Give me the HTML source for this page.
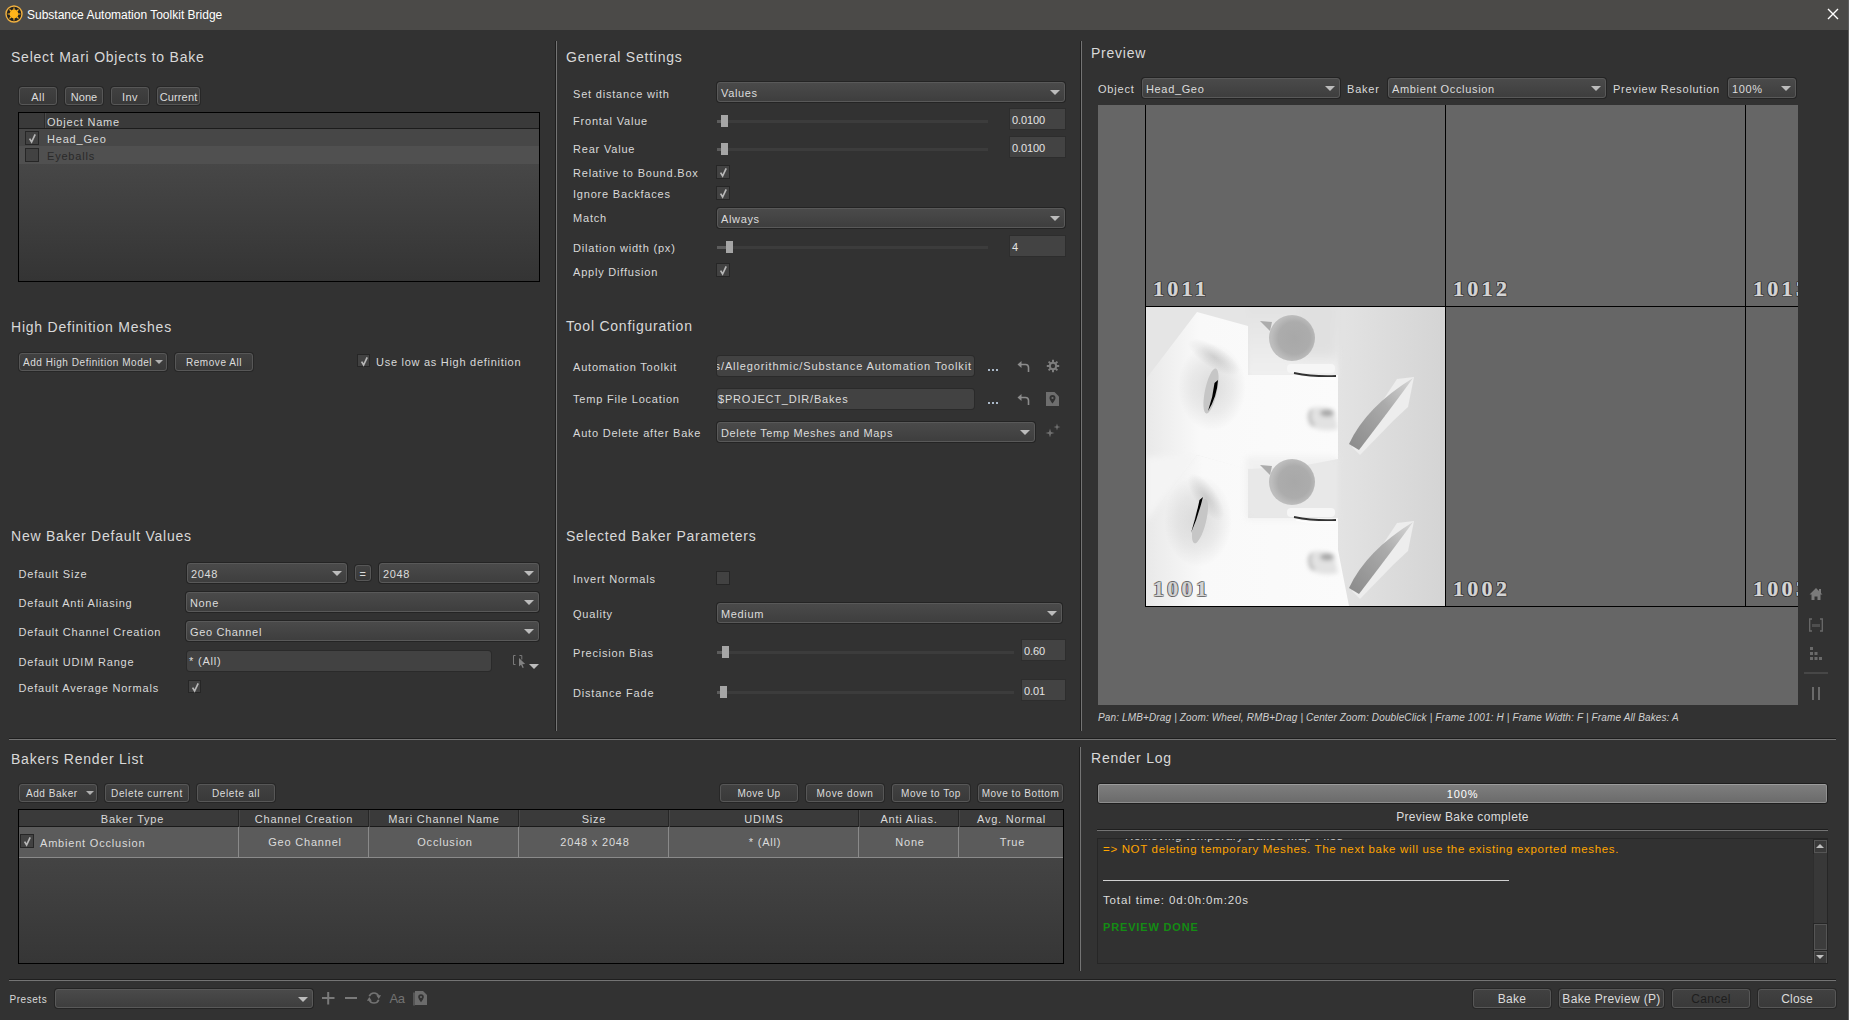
<!DOCTYPE html>
<html><head><meta charset="utf-8"><style>
*{box-sizing:border-box;margin:0;padding:0}
html,body{width:1849px;height:1020px;overflow:hidden;background:#323232;font-family:"Liberation Sans",sans-serif;color:#d4d4d4}
.a{position:absolute;white-space:nowrap}
.h{position:absolute;white-space:nowrap;font-size:14px;line-height:14px;letter-spacing:.77px;color:#d9d9d9}
.l{position:absolute;white-space:nowrap;font-size:11px;line-height:11px;letter-spacing:.8px;color:#d9d9d9}
.btn{position:absolute;border:1px solid #575757;border-radius:3px;background:linear-gradient(#414141,#393939);box-shadow:0 0 0 1px #272727;font-size:10px;letter-spacing:.55px;text-align:center;color:#dcdcdc;white-space:nowrap}
.cb{position:absolute;border:1px solid #595959;border-radius:3px;background:linear-gradient(#4a4a4a,#3e3e3e);box-shadow:0 0 0 1px #242424;font-size:11px;letter-spacing:.65px;color:#dcdcdc;white-space:nowrap;padding-left:3px;overflow:hidden}
.ar{position:absolute;width:0;height:0;border-left:5px solid transparent;border-right:5px solid transparent;border-top:5px solid #bcbcbc}
.inp{position:absolute;box-shadow:0 0 0 1px #2a2a2a;border-radius:3px;background:#424242;font-size:11px;letter-spacing:.8px;color:#dcdcdc;white-space:nowrap;overflow:hidden;padding-left:1px}
.vb{position:absolute;background:#434343;box-shadow:0 0 0 1px #2d2d2d;font-size:11px;letter-spacing:-.1px;color:#e4e4e4;padding-left:2px;white-space:nowrap}
.chk{position:absolute;border:1px solid #262626;background:#424242}
.vl{position:absolute;width:1px;background:#1e1e1e;box-shadow:1px 0 0 #747474}
.hl{position:absolute;height:1px;background:#1e1e1e;box-shadow:0 1px 0 #747474}
.gr{position:absolute;height:3px;background:#3c3c3c}
.gl{position:absolute;height:3px;background:#5c5c5c}
.hd{position:absolute;background:#a5a5a5}
.ico{position:absolute}
.tile{position:absolute;font-family:"Liberation Serif",serif;font-weight:bold;font-size:22px;line-height:22px;letter-spacing:3.3px;color:#d4d4d4;-webkit-text-stroke:.5px #d4d4d4;text-shadow:1px 0 0 rgba(0,0,0,.42),-1px 0 0 rgba(0,0,0,.42),0 1px 0 rgba(0,0,0,.42),0 -1px 0 rgba(0,0,0,.42),1px 1px 0 rgba(0,0,0,.3),-1px -1px 0 rgba(0,0,0,.3),1px -1px 0 rgba(0,0,0,.3),-1px 1px 0 rgba(0,0,0,.3)}
.th{position:absolute;font-size:11px;line-height:17px;letter-spacing:.8px;color:#d9d9d9;text-align:center;white-space:nowrap;overflow:hidden}
.td{position:absolute;font-size:11px;line-height:30px;letter-spacing:.8px;color:#dcdcdc;text-align:center;white-space:nowrap;overflow:hidden}
</style></head><body>
<div class="a" style="left:0px;top:0px;width:1849px;height:30px;background:#4b4a48"></div>
<svg class="ico" style="left:5px;top:5px" width="18" height="18" viewBox="0 0 18 18">
 <circle cx="9" cy="9" r="8" fill="#222" stroke="#f0b040" stroke-width="1.4"/>
 <circle cx="9" cy="9" r="4.4" fill="#ffb41a"/>
 <g stroke="#ffb41a" stroke-width="1.1"><path d="M9 2.6v3M9 12.4v3M2.6 9h3M12.4 9h3M4.5 4.5l2 2M11.5 11.5l2 2M13.5 4.5l-2 2M4.5 13.5l2-2"/></g>
</svg>
<div class="a" style="left:27px;top:9px;font-size:12px;line-height:12px;color:#fff">Substance Automation Toolkit Bridge</div>
<svg class="ico" style="left:1827px;top:8px" width="12" height="12" viewBox="0 0 12 12"><path d="M1 1L11 11M11 1L1 11" stroke="#fff" stroke-width="1.4"/></svg>
<div class="a" style="left:1848px;top:0px;width:1px;height:1020px;background:#5e5e5e"></div>
<div class="vl" style="left:555px;top:41px;height:690px"></div>
<div class="vl" style="left:1080px;top:41px;height:690px"></div>
<div class="hl" style="left:9px;top:738px;width:1827px"></div>
<div class="vl" style="left:1079px;top:747px;height:224px"></div>
<div class="hl" style="left:9px;top:979px;width:1827px"></div>
<div class="h" style="left:11px;top:49.6px;">Select Mari Objects to Bake</div>
<div class="btn" style="left:19px;top:87px;width:38px;height:18px;line-height:18px;font-size:11px;letter-spacing:.5px">All</div>
<div class="btn" style="left:65px;top:87px;width:38px;height:18px;line-height:18px;font-size:11px;letter-spacing:.1px">None</div>
<div class="btn" style="left:111px;top:87px;width:38px;height:18px;line-height:18px;font-size:11px;letter-spacing:.5px">Inv</div>
<div class="btn" style="left:157px;top:87px;width:43px;height:18px;line-height:18px;font-size:11px;letter-spacing:.15px">Current</div>
<div class="a" style="left:18px;top:112px;width:522px;height:170px;border:1px solid #000;background:linear-gradient(#4f4f4f,#343434)"></div>
<div class="a" style="left:19px;top:113px;width:520px;height:16px;background:#3a3a3a;border-bottom:1px solid #1c1c1c"></div>
<div class="a" style="left:44px;top:113px;width:1px;height:15px;background:#2a2a2a;box-shadow:1px 0 0 #4a4a4a"></div>
<div class="l" style="left:47px;top:116.8px;font-size:11px;line-height:11px;">Object Name</div>
<div class="a" style="left:19px;top:129px;width:520px;height:17px;background:#474747"></div>
<div class="a" style="left:19px;top:146px;width:520px;height:18px;background:#505050"></div>
<div class="chk" style="left:25px;top:131px;width:14px;height:14px"><svg width="13" height="13" viewBox="0 0 13 13" style="position:absolute;left:0;top:0"><path d="M3.6 6.6L5.6 10L9.2 2.4" fill="none" stroke="#b8b8b8" stroke-width="1.7"/></svg></div>
<div class="chk" style="left:25px;top:148px;width:14px;height:14px"></div>
<div class="l" style="left:47px;top:133.8px;font-size:11px;line-height:11px;">Head_Geo</div>
<div class="l" style="left:47px;top:150.8px;font-size:11px;line-height:11px;color:#2a2a2a">Eyeballs</div>
<div class="h" style="left:11px;top:320.4px;">High Definition Meshes</div>
<div class="btn" style="left:19px;top:353px;width:148px;height:18px;line-height:18px;text-align:left;padding-left:3px;letter-spacing:.54px">Add High Definition Model</div>
<div class="ar" style="left:155px;top:360px;border-width:4px 4px 0;border-top-color:#b0b0b0"></div>
<div class="btn" style="left:175px;top:353px;width:78px;height:18px;line-height:18px;">Remove All</div>
<div class="chk" style="left:357px;top:354px;width:13px;height:13px"><svg width="13" height="13" viewBox="0 0 13 13" style="position:absolute;left:0;top:0"><path d="M3.6 6.6L5.6 10L9.2 2.4" fill="none" stroke="#b8b8b8" stroke-width="1.7"/></svg></div>
<div class="l" style="left:376px;top:356.9px;font-size:11px;line-height:11px;letter-spacing:.72px">Use low as High definition</div>
<div class="h" style="left:11px;top:529.4px;">New Baker Default Values</div>
<div class="l" style="left:18.5px;top:569.3px;font-size:11px;line-height:11px;">Default Size</div>
<div class="l" style="left:18.5px;top:598.3px;font-size:11px;line-height:11px;">Default Anti Aliasing</div>
<div class="l" style="left:18.5px;top:626.7px;font-size:11px;line-height:11px;">Default Channel Creation</div>
<div class="l" style="left:18.5px;top:657.3px;font-size:11px;line-height:11px;">Default UDIM Range</div>
<div class="l" style="left:18.5px;top:683.3px;font-size:11px;line-height:11px;">Default Average Normals</div>
<div class="cb" style="left:187px;top:563px;width:160px;height:20px;line-height:20px;">2048</div>
<div class="ar" style="left:332px;top:571.0px"></div>
<div class="btn" style="left:355px;top:565px;width:16px;height:16px;line-height:16px;font-size:11px">=</div>
<div class="cb" style="left:379px;top:563px;width:160px;height:20px;line-height:20px;">2048</div>
<div class="ar" style="left:524px;top:571.0px"></div>
<div class="cb" style="left:186px;top:592px;width:353px;height:20px;line-height:20px;">None</div>
<div class="ar" style="left:524px;top:600.0px"></div>
<div class="cb" style="left:186px;top:621px;width:353px;height:20px;line-height:20px;">Geo Channel</div>
<div class="ar" style="left:524px;top:629.0px"></div>
<div class="inp" style="left:187px;top:651px;width:304px;height:20px;line-height:20px;padding-left:2px">* (All)</div>
<svg class="ico" style="left:511px;top:653px" width="30" height="18" viewBox="0 0 30 18">
<path d="M4.5 2.5h-2v9h2M8.5 2.5h2.3v4" fill="none" stroke="#7a7a7a" stroke-width="1"/>
<path d="M8 5l0 8.5l2-1.8l1.6 3.4l1.2-.6l-1.5-3.3l2.9-.1z" fill="#828282"/>
<path d="M18 11h10l-5 5z" fill="#bcbcbc"/>
</svg>
<div class="chk" style="left:188px;top:680px;width:13px;height:13px"><svg width="13" height="13" viewBox="0 0 13 13" style="position:absolute;left:0;top:0"><path d="M3.6 6.6L5.6 10L9.2 2.4" fill="none" stroke="#b8b8b8" stroke-width="1.7"/></svg></div>
<div class="h" style="left:566px;top:49.6px;">General Settings</div>
<div class="l" style="left:573px;top:88.5px;font-size:11px;line-height:11px;">Set distance with</div>
<div class="cb" style="left:717px;top:82px;width:348px;height:20px;line-height:20px;">Values</div>
<div class="ar" style="left:1050px;top:90.0px"></div>
<div class="l" style="left:573px;top:115.9px;font-size:11px;line-height:11px;">Frontal Value</div>
<div class="gr" style="left:717px;top:120.0px;width:271px"></div>
<div class="gl" style="left:717px;top:120.0px;width:4px"></div>
<div class="hd" style="left:721px;top:115px;width:7px;height:12px"></div>
<div class="vb" style="left:1010px;top:109px;width:55px;height:20px;line-height:19px;padding-top:2px">0.0100</div>
<div class="l" style="left:573px;top:143.7px;font-size:11px;line-height:11px;">Rear Value</div>
<div class="gr" style="left:717px;top:148.0px;width:271px"></div>
<div class="gl" style="left:717px;top:148.0px;width:4px"></div>
<div class="hd" style="left:721px;top:143px;width:7px;height:12px"></div>
<div class="vb" style="left:1010px;top:137px;width:55px;height:20px;line-height:19px;padding-top:2px">0.0100</div>
<div class="l" style="left:573px;top:168.0px;font-size:11px;line-height:11px;">Relative to Bound.Box</div>
<div class="chk" style="left:716px;top:165px;width:14px;height:14px"><svg width="13" height="13" viewBox="0 0 13 13" style="position:absolute;left:0;top:0"><path d="M3.6 6.6L5.6 10L9.2 2.4" fill="none" stroke="#b8b8b8" stroke-width="1.7"/></svg></div>
<div class="l" style="left:573px;top:189.1px;font-size:11px;line-height:11px;">Ignore Backfaces</div>
<div class="chk" style="left:716px;top:186px;width:14px;height:14px"><svg width="13" height="13" viewBox="0 0 13 13" style="position:absolute;left:0;top:0"><path d="M3.6 6.6L5.6 10L9.2 2.4" fill="none" stroke="#b8b8b8" stroke-width="1.7"/></svg></div>
<div class="l" style="left:573px;top:213.1px;font-size:11px;line-height:11px;">Match</div>
<div class="cb" style="left:717px;top:208px;width:348px;height:20px;line-height:20px;">Always</div>
<div class="ar" style="left:1050px;top:216.0px"></div>
<div class="l" style="left:573px;top:242.9px;font-size:11px;line-height:11px;">Dilation width (px)</div>
<div class="gr" style="left:717px;top:245.5px;width:271px"></div>
<div class="gl" style="left:717px;top:245.5px;width:9px"></div>
<div class="hd" style="left:726px;top:241px;width:7px;height:12px"></div>
<div class="vb" style="left:1010px;top:236px;width:55px;height:20px;line-height:19px;padding-top:2px">4</div>
<div class="l" style="left:573px;top:266.6px;font-size:11px;line-height:11px;">Apply Diffusion</div>
<div class="chk" style="left:716px;top:263px;width:14px;height:14px"><svg width="13" height="13" viewBox="0 0 13 13" style="position:absolute;left:0;top:0"><path d="M3.6 6.6L5.6 10L9.2 2.4" fill="none" stroke="#b8b8b8" stroke-width="1.7"/></svg></div>
<div class="h" style="left:566px;top:319.4px;">Tool Configuration</div>
<div class="l" style="left:573px;top:361.6px;font-size:11px;line-height:11px;">Automation Toolkit</div>
<div class="inp" style="left:717px;top:356px;width:257px;height:20px;line-height:20px;letter-spacing:.88px"><span style="position:absolute;right:2px;top:0">es/Allegorithmic/Substance Automation Toolkit</span></div>
<div class="l" style="left:573px;top:394.4px;font-size:11px;line-height:11px;">Temp File Location</div>
<div class="inp" style="left:717px;top:389px;width:257px;height:20px;line-height:20px;">$PROJECT_DIR/Bakes</div>
<div class="l" style="left:573px;top:428.3px;font-size:11px;line-height:11px;">Auto Delete after Bake</div>
<div class="cb" style="left:717px;top:422px;width:318px;height:20px;line-height:20px;">Delete Temp Meshes and Maps</div>
<div class="ar" style="left:1020px;top:430.0px"></div>
<div class="a" style="left:988px;top:369px;width:2px;height:2px;background:#aab8c8"></div>
<div class="a" style="left:992px;top:369px;width:2px;height:2px;background:#aab8c8"></div>
<div class="a" style="left:996px;top:369px;width:2px;height:2px;background:#aab8c8"></div>
<div class="a" style="left:988px;top:402px;width:2px;height:2px;background:#aab8c8"></div>
<div class="a" style="left:992px;top:402px;width:2px;height:2px;background:#aab8c8"></div>
<div class="a" style="left:996px;top:402px;width:2px;height:2px;background:#aab8c8"></div>
<svg class="ico" style="left:1017px;top:360px" width="13" height="13" viewBox="0 0 13 13"><path d="M3 4.5h5.5a3 3 0 0 1 3 3V12" fill="none" stroke="#8c8c8c" stroke-width="1.6"/><path d="M0.5 4.5L4.5 1v7z" fill="#8c8c8c"/></svg>
<svg class="ico" style="left:1017px;top:393px" width="13" height="13" viewBox="0 0 13 13"><path d="M3 4.5h5.5a3 3 0 0 1 3 3V12" fill="none" stroke="#8c8c8c" stroke-width="1.6"/><path d="M0.5 4.5L4.5 1v7z" fill="#8c8c8c"/></svg>
<svg class="ico" style="left:1046px;top:359px" width="14" height="14" viewBox="0 0 14 14">
<g fill="#7e7e7e"><circle cx="7" cy="7" r="4.2"/>
<g stroke="#7e7e7e" stroke-width="2"><path d="M7 0.8v2.6M7 10.6v2.6M0.8 7h2.6M10.6 7h2.6M2.6 2.6l1.8 1.8M9.6 9.6l1.8 1.8M11.4 2.6l-1.8 1.8M2.6 11.4l1.8-1.8"/></g></g>
<circle cx="7" cy="7" r="2.2" fill="#323232"/></svg>
<svg class="ico" style="left:1045px;top:391px" width="15" height="16" viewBox="0 0 15 16">
<path d="M1 1h8.5l4.5 4.5V15H1z" fill="#6e6e6e"/><path d="M7.5 4a3 3 0 0 1 3 3c0 2-3 5.5-3 5.5S4.5 9 4.5 7a3 3 0 0 1 3-3z" fill="#323232"/><circle cx="7.5" cy="7" r="1.1" fill="#6e6e6e"/></svg>
<svg class="ico" style="left:1045px;top:423px" width="17" height="17" viewBox="0 0 17 17">
<path d="M5 5.5L6 9L9.5 10L6 11L5 14.5L4 11L0.5 10L4 9z" fill="#707070"/>
<path d="M12 0.5L12.8 3.2L15.5 4L12.8 4.8L12 7.5L11.2 4.8L8.5 4L11.2 3.2z" fill="#707070"/>
</svg>
<div class="h" style="left:566px;top:529.4px;">Selected Baker Parameters</div>
<div class="l" style="left:573px;top:573.6px;font-size:11px;line-height:11px;">Invert Normals</div>
<div class="chk" style="left:716px;top:571px;width:14px;height:14px"></div>
<div class="l" style="left:573px;top:609.3px;font-size:11px;line-height:11px;">Quality</div>
<div class="cb" style="left:717px;top:603px;width:345px;height:20px;line-height:20px;">Medium</div>
<div class="ar" style="left:1047px;top:611.0px"></div>
<div class="l" style="left:573px;top:647.7px;font-size:11px;line-height:11px;">Precision Bias</div>
<div class="gr" style="left:717px;top:651.0px;width:297px"></div>
<div class="gl" style="left:717px;top:651.0px;width:5px"></div>
<div class="hd" style="left:722px;top:646px;width:7px;height:12px"></div>
<div class="vb" style="left:1022px;top:640px;width:43px;height:20px;line-height:19px;padding-top:2px">0.60</div>
<div class="l" style="left:573px;top:688.3px;font-size:11px;line-height:11px;">Distance Fade</div>
<div class="gr" style="left:717px;top:691.0px;width:297px"></div>
<div class="gl" style="left:717px;top:691.0px;width:3px"></div>
<div class="hd" style="left:720px;top:686px;width:7px;height:12px"></div>
<div class="vb" style="left:1022px;top:680px;width:43px;height:20px;line-height:19px;padding-top:2px">0.01</div>
<div class="h" style="left:1091px;top:45.6px;">Preview</div>
<div class="l" style="left:1098px;top:84.3px;font-size:11px;line-height:11px;">Object</div>
<div class="cb" style="left:1142px;top:78px;width:198px;height:20px;line-height:20px;">Head_Geo</div>
<div class="ar" style="left:1325px;top:86.0px"></div>
<div class="l" style="left:1347px;top:84.3px;font-size:11px;line-height:11px;">Baker</div>
<div class="cb" style="left:1388px;top:78px;width:218px;height:20px;line-height:20px;">Ambient Occlusion</div>
<div class="ar" style="left:1591px;top:86.0px"></div>
<div class="l" style="left:1613px;top:84.3px;font-size:11px;line-height:11px;letter-spacing:.71px">Preview Resolution</div>
<div class="cb" style="left:1728px;top:78px;width:68px;height:20px;line-height:20px;">100%</div>
<div class="ar" style="left:1781px;top:86.0px"></div>
<div class="a" style="left:1098px;top:105px;width:700px;height:600px;background:#666;overflow:hidden">
<svg style="position:absolute;left:48px;top:202px" width="299" height="299" viewBox="0 0 299 299"><defs>
<linearGradient id="rg" x1="0" y1="0" x2="1" y2="0"><stop offset="0" stop-color="#e3e3e3"/><stop offset="1" stop-color="#d4d4d4"/></linearGradient>
<linearGradient id="tg" x1="0" y1="0" x2="0" y2="1"><stop offset="0" stop-color="#e0e0e0"/><stop offset="1" stop-color="#f0f0f0"/></linearGradient>
<linearGradient id="fg" x1="0" y1="0" x2="1" y2="0"><stop offset="0" stop-color="#e9e9e9"/><stop offset="0.28" stop-color="#f9f9f9"/><stop offset="1" stop-color="#fbfbfb"/></linearGradient>
<radialGradient id="eyeg" cx="0.55" cy="0.5" r="0.5"><stop offset="0" stop-color="#a8a8a8"/><stop offset="0.7" stop-color="#acacac"/><stop offset="1" stop-color="#bdbdbd"/></radialGradient>
<radialGradient id="sh" cx="0.5" cy="0.5" r="0.5"><stop offset="0" stop-color="#000" stop-opacity="0.12"/><stop offset="0.6" stop-color="#000" stop-opacity="0.06"/><stop offset="1" stop-color="#000" stop-opacity="0"/></radialGradient>
<radialGradient id="sh2" cx="0.5" cy="0.5" r="0.5"><stop offset="0" stop-color="#000" stop-opacity="0.13"/><stop offset="1" stop-color="#000" stop-opacity="0"/></radialGradient>
<linearGradient id="bl" x1="0" y1="1" x2="1" y2="0"><stop offset="0" stop-color="#8a8a8a"/><stop offset="0.6" stop-color="#ababab"/><stop offset="1" stop-color="#d8d8d8"/></linearGradient>
<filter id="b2" x="-20%" y="-20%" width="140%" height="140%"><feGaussianBlur stdDeviation="2"/></filter>
<filter id="b5" x="-30%" y="-30%" width="160%" height="160%"><feGaussianBlur stdDeviation="6"/></filter>
<filter id="b1" x="-20%" y="-20%" width="140%" height="140%"><feGaussianBlur stdDeviation="0.7"/></filter>
<filter id="b3" x="-30%" y="-30%" width="160%" height="160%"><feGaussianBlur stdDeviation="3"/></filter>
</defs>
<rect width="299" height="299" fill="#e5e5e5"/>
<rect x="192" y="0" width="107" height="299" fill="url(#rg)"/>
<rect x="102" y="-10" width="90" height="80" fill="url(#tg)" filter="url(#b2)"/>
<rect x="150" y="-10" width="42" height="60" fill="#e0e0e0" filter="url(#b5)"/>
<path d="M51 5 L102 19 L102 68 L192 68 L192 152 L150 160 L100 162 L51 148 L0 215 L0 72 Z" fill="url(#fg)"/>
<path d="M51 148 L102 162 L102 211 L192 211 L192 243 L203 299 L0 299 L0 215 Z" fill="url(#fg)"/><path d="M0 150 L51 148 L0 215 Z" fill="#f4f4f4" filter="url(#b3)"/>
<rect x="100" y="150" width="92" height="62" fill="#eaeaea" filter="url(#b3)" opacity="0.6"/>
<ellipse cx="66" cy="80" rx="34" ry="44" fill="url(#sh)"/>
<ellipse cx="52" cy="214" rx="34" ry="46" fill="url(#sh)"/>
<ellipse cx="68" cy="50" rx="30" ry="11" transform="rotate(32 68 50)" fill="url(#sh2)"/>
<ellipse cx="60" cy="190" rx="28" ry="11" transform="rotate(55 60 190)" fill="url(#sh2)"/>
<g filter="url(#b1)">
<ellipse cx="65" cy="84" rx="6" ry="23" transform="rotate(12 65 84)" fill="#c6c6c6"/>
<path d="M72 73 Q71 90 62 104 Q67 90 68.5 76 Z" fill="#000"/>
<ellipse cx="54" cy="214" rx="6" ry="23" transform="rotate(14 54 214)" fill="#c6c6c6"/>
<path d="M57 190 Q52 210 45 226 Q50 210 53.5 193 Z" fill="#000"/>
</g>
<g filter="url(#b1)">
<circle cx="146" cy="31" r="23" fill="url(#eyeg)"/>
<circle cx="146" cy="175" r="23" fill="url(#eyeg)"/>
<path d="M114 14 L126 15 L124 24z" fill="#acacac"/>
<path d="M114 158 L126 159 L124 168z" fill="#acacac"/>
<rect x="141" y="57" width="48" height="9" rx="4" fill="#f6f6f6"/>
<rect x="141" y="201" width="48" height="9" rx="4" fill="#f6f6f6"/>
<path d="M148 66 Q168 70 190 69" stroke="#333" stroke-width="1.8" fill="none"/>
<path d="M148 210 Q168 214 190 213" stroke="#333" stroke-width="1.8" fill="none"/>
<path d="M150 69 Q168 73 190 72" stroke="#fff" stroke-width="1.2" fill="none"/>
<path d="M150 213 Q168 217 190 216" stroke="#fff" stroke-width="1.2" fill="none"/>
</g>
<g filter="url(#b2)">
<path d="M163 118 Q158 104 170 100 Q182 100 188 104 L192 122 Q175 126 163 118z" fill="#e2e2e2"/><path d="M168 119 Q160 110 166 102" stroke="#a8a8a8" stroke-width="2" fill="none"/>
<path d="M163 262 Q158 248 170 244 Q182 244 188 248 L192 266 Q175 270 163 262z" fill="#e2e2e2"/><path d="M168 263 Q160 254 166 246" stroke="#a8a8a8" stroke-width="2" fill="none"/>
<ellipse cx="181" cy="106" rx="7" ry="3.5" fill="#a6a6a6"/>
<ellipse cx="181" cy="250" rx="7" ry="3.5" fill="#a6a6a6"/>
</g>
<g filter="url(#b1)">
<path d="M251 72 L268 70 L262 100 L248 113 L214 148 L206 140 Z" fill="#ededed"/>
<path d="M251 216 L268 214 L262 244 L248 257 L214 292 L206 284 Z" fill="#ededed"/>
<path d="M203 137 Q220 100 267 71 Q252 92 213 143 Z" fill="url(#bl)"/>
<path d="M203 281 Q220 244 267 215 Q252 236 213 287 Z" fill="url(#bl)"/>
</g>
</svg>
<div class="a" style="left:47px;top:0;width:1px;height:502px;background:#000"></div>
<div class="a" style="left:347px;top:0;width:1px;height:502px;background:#000"></div>
<div class="a" style="left:647px;top:0;width:1px;height:502px;background:#000"></div>
<div class="a" style="left:47px;top:201px;width:700px;height:1px;background:#000"></div>
<div class="a" style="left:47px;top:501px;width:700px;height:1px;background:#000"></div>
<div class="tile" style="left:55px;top:173.4px;">1011</div>
<div class="tile" style="left:355px;top:173.4px;">1012</div>
<div class="tile" style="left:655px;top:173.4px;">1013</div>
<div class="tile" style="left:55px;top:473.4px;">1001</div>
<div class="tile" style="left:355px;top:473.4px;">1002</div>
<div class="tile" style="left:655px;top:473.4px;">1003</div>
</div>
<svg class="ico" style="left:1804px;top:586px" width="24" height="120" viewBox="-4 0 24 120">
<g fill="#7a7a7a">
<path d="M8 2L1.5 8.5H3.5V14H6.5V10.5H9.5V14H12.5V8.5H14.5z"/><rect x="11" y="3" width="2" height="4"/>
</g>
<g fill="none" stroke="#6a6a6a" stroke-width="1.3"><path d="M4 33h-2.3v12H4M12 33h2.3v12H12"/></g>
<g fill="#6a6a6a"><rect x="4.5" y="38" width="1" height="3"/><rect x="6.5" y="38" width="1" height="3"/><rect x="8.5" y="38" width="1" height="3"/><rect x="10.5" y="38" width="1" height="3"/></g>
<g fill="#6a6a6a"><rect x="2" y="61" width="3" height="3"/><rect x="2" y="66" width="3" height="3"/><rect x="6.5" y="66" width="3" height="3"/><rect x="2" y="71" width="3" height="3"/><rect x="6.5" y="71" width="3" height="3"/><rect x="11" y="71" width="3" height="3"/></g>
<rect x="-4" y="86.5" width="24" height="1" fill="#5c5c5c"/>
<g fill="#6a6a6a"><rect x="4" y="101" width="2" height="13"/><rect x="10" y="101" width="2" height="13"/></g>
</svg>
<div class="a" style="left:1098px;top:713px;font-size:10px;line-height:10px;font-style:italic;letter-spacing:.14px;color:#d0d0d0">Pan: LMB+Drag | Zoom: Wheel, RMB+Drag | Center Zoom: DoubleClick | Frame 1001: H | Frame Width: F | Frame All Bakes: A</div>
<div class="h" style="left:11px;top:751.7px;">Bakers Render List</div>
<div class="btn" style="left:19px;top:784px;width:78px;height:18px;line-height:18px;text-align:left;padding-left:6px">Add Baker</div>
<div class="ar" style="left:86px;top:791px;border-width:4px 4px 0;border-top-color:#b0b0b0"></div>
<div class="btn" style="left:105px;top:784px;width:84px;height:18px;line-height:18px;letter-spacing:.65px">Delete current</div>
<div class="btn" style="left:197px;top:784px;width:78px;height:18px;line-height:18px;letter-spacing:.65px">Delete all</div>
<div class="btn" style="left:720px;top:784px;width:78px;height:18px;line-height:18px;letter-spacing:.45px">Move Up</div>
<div class="btn" style="left:806px;top:784px;width:78px;height:18px;line-height:18px;letter-spacing:.65px">Move down</div>
<div class="btn" style="left:892px;top:784px;width:78px;height:18px;line-height:18px;letter-spacing:.5px">Move to Top</div>
<div class="btn" style="left:978px;top:784px;width:85px;height:18px;line-height:18px;letter-spacing:.55px">Move to Bottom</div>
<div class="a" style="left:18px;top:809px;width:1046px;height:155px;border:1px solid #000;background:linear-gradient(#4a4a4a,#363636)"></div>
<div class="a" style="left:19px;top:810px;width:1044px;height:17px;background:#3a3a3a;border-bottom:1px solid #1a1a1a"></div>
<div class="a" style="left:19px;top:827px;width:1044px;height:31px;background:#5b5b5b;border-bottom:1px solid #8a8a8a"></div>
<div class="th" style="left:27px;top:810.8px;width:211px;height:17px">Baker Type</div>
<div class="th" style="left:240px;top:810.8px;width:128px;height:17px">Channel Creation</div>
<div class="td" style="left:240px;top:827px;width:130px;height:30px">Geo Channel</div>
<div class="a" style="left:238px;top:810px;width:1px;height:17px;background:#262626;box-shadow:1px 0 0 #474747"></div>
<div class="a" style="left:238px;top:827px;width:1px;height:30px;background:#8a8a8a"></div>
<div class="th" style="left:370px;top:810.8px;width:148px;height:17px">Mari Channel Name</div>
<div class="td" style="left:370px;top:827px;width:150px;height:30px">Occlusion</div>
<div class="a" style="left:368px;top:810px;width:1px;height:17px;background:#262626;box-shadow:1px 0 0 #474747"></div>
<div class="a" style="left:368px;top:827px;width:1px;height:30px;background:#8a8a8a"></div>
<div class="th" style="left:520px;top:810.8px;width:148px;height:17px">Size</div>
<div class="td" style="left:520px;top:827px;width:150px;height:30px">2048 x 2048</div>
<div class="a" style="left:518px;top:810px;width:1px;height:17px;background:#262626;box-shadow:1px 0 0 #474747"></div>
<div class="a" style="left:518px;top:827px;width:1px;height:30px;background:#8a8a8a"></div>
<div class="th" style="left:670px;top:810.8px;width:188px;height:17px">UDIMS</div>
<div class="td" style="left:670px;top:827px;width:190px;height:30px">* (All)</div>
<div class="a" style="left:668px;top:810px;width:1px;height:17px;background:#262626;box-shadow:1px 0 0 #474747"></div>
<div class="a" style="left:668px;top:827px;width:1px;height:30px;background:#8a8a8a"></div>
<div class="th" style="left:860px;top:810.8px;width:98px;height:17px">Anti Alias.</div>
<div class="td" style="left:860px;top:827px;width:100px;height:30px">None</div>
<div class="a" style="left:858px;top:810px;width:1px;height:17px;background:#262626;box-shadow:1px 0 0 #474747"></div>
<div class="a" style="left:858px;top:827px;width:1px;height:30px;background:#8a8a8a"></div>
<div class="th" style="left:960px;top:810.8px;width:103px;height:17px">Avg. Normal</div>
<div class="td" style="left:960px;top:827px;width:105px;height:30px">True</div>
<div class="a" style="left:958px;top:810px;width:1px;height:17px;background:#262626;box-shadow:1px 0 0 #474747"></div>
<div class="a" style="left:958px;top:827px;width:1px;height:30px;background:#8a8a8a"></div>
<div class="chk" style="left:20px;top:834px;width:14px;height:14px"><svg width="13" height="13" viewBox="0 0 13 13" style="position:absolute;left:0;top:0"><path d="M3.6 6.6L5.6 10L9.2 2.4" fill="none" stroke="#b8b8b8" stroke-width="1.7"/></svg></div>
<div class="l" style="left:40px;top:837.8px;font-size:11px;line-height:11px;color:#dcdcdc">Ambient Occlusion</div>
<div class="h" style="left:1091px;top:751.4px;">Render Log</div>
<div class="a" style="left:1097px;top:783px;width:731px;height:21px;border:1px solid #1e1e1e;border-radius:3px;background:linear-gradient(#7f7f7f,#6a6a6a);box-shadow:inset 0 1px 0 #9c9c9c,inset 0 -1px 0 #8e8e8e,inset 1px 0 0 #909090,inset -1px 0 0 #909090"></div>
<div class="a" style="left:1097px;top:789px;width:731px;text-align:center;font-size:11px;line-height:11px;letter-spacing:.9px;color:#fff">100%</div>
<div class="a" style="left:1097px;top:811px;width:731px;text-align:center;font-size:12px;line-height:12px;letter-spacing:.35px;color:#dcdcdc">Preview Bake complete</div>
<div class="hl" style="left:1097px;top:829px;width:731px"></div>
<div class="a" style="left:1097px;top:838px;width:731px;height:126px;border:1px solid #262626;background:#313131;overflow:hidden">
<div class="a" style="left:27px;top:-7.6px;font-size:11.5px;line-height:11.5px;letter-spacing:.67px;color:#d0d0d0">Removing temporary Baked Map Files</div>
<div class="a" style="left:5px;top:5px;font-size:11.5px;line-height:11.5px;letter-spacing:.67px;color:#ffa500">=&gt; NOT deleting temporary Meshes. The next bake will use the existing exported meshes.</div>
<div class="a" style="left:5px;top:41px;width:406px;height:1px;background:#d0d0d0"></div>
<div class="a" style="left:5px;top:56.3px;font-size:11.5px;line-height:11.5px;letter-spacing:.86px;color:#dcdcdc">Total time: 0d:0h:0m:20s</div>
<div class="a" style="left:5px;top:82.9px;font-size:11px;line-height:11px;font-weight:bold;letter-spacing:.84px;color:#148c14">PREVIEW DONE</div>
<div class="a" style="left:715px;top:0px;width:15px;height:124px;background:#2e2e2e"></div>
<div class="a" style="left:716px;top:1px;width:13px;height:13px;border:1px solid #555;background:#3a3a3a;box-shadow:0 0 0 1px #262626"></div>
<div class="ar" style="left:718px;top:5px;border-width:0 4.5px 4px;border-top:0;border-bottom:4px solid #c0c0c0"></div>
<div class="a" style="left:716px;top:14px;width:13px;height:70px;background:#383838"></div>
<div class="a" style="left:716px;top:85px;width:13px;height:26px;border:1px solid #555;background:#3c3c3c;box-shadow:0 0 0 1px #262626"></div>
<div class="a" style="left:716px;top:112px;width:13px;height:13px;border:1px solid #555;background:#3a3a3a;box-shadow:0 0 0 1px #262626"></div>
<div class="ar" style="left:718px;top:116px;border-width:4px 4.5px 0;border-top-color:#c0c0c0"></div>
</div>
<div class="l" style="left:9.5px;top:995.1px;font-size:10px;line-height:10px;letter-spacing:.54px">Presets</div>
<div class="cb" style="left:55px;top:989px;width:258px;height:19px;line-height:19px;"></div>
<div class="ar" style="left:298px;top:996.5px"></div>
<svg class="ico" style="left:320px;top:990px" width="110" height="17" viewBox="0 0 110 17">
<g fill="#7a7a7a">
<rect x="2" y="7" width="12.5" height="2"/><rect x="7.2" y="2" width="2" height="12.5"/>
<rect x="25" y="7" width="12" height="2"/>
</g>
<g fill="none" stroke="#737373" stroke-width="1.7"><path d="M49.3 6.3A5 5 0 0 1 58.7 6.3M58.7 9.7A5 5 0 0 1 49.3 9.7"/></g>
<path d="M56.3 5.3h4.8l-2.4 3.6z M51.7 10.7h-4.8l2.4-3.6z" fill="#737373"/>
<text x="69.5" y="13.2" font-family="Liberation Sans" font-size="13" fill="#727272" style="letter-spacing:-.3px">Aa</text>
<path d="M93 2.5h2v13h-2z" fill="#555"/>
<path d="M95 1h8l4 4V15H95z" fill="#6c6c6c"/><path d="M101 4.2a2.8 2.8 0 0 1 2.8 2.8c0 1.9-2.8 5.2-2.8 5.2s-2.8-3.3-2.8-5.2A2.8 2.8 0 0 1 101 4.2z" fill="#323232"/><circle cx="101" cy="7" r="1" fill="#6c6c6c"/>
</svg>
<div class="btn" style="left:1473px;top:989px;width:78px;height:19px;line-height:19px;font-size:12px;letter-spacing:.25px">Bake</div>
<div class="btn" style="left:1559px;top:989px;width:105px;height:19px;line-height:19px;font-size:12px;letter-spacing:.36px">Bake Preview (P)</div>
<div class="btn" style="left:1672px;top:989px;width:78px;height:19px;line-height:19px;font-size:12px;letter-spacing:.35px;color:#1e1e1e">Cancel</div>
<div class="btn" style="left:1758px;top:989px;width:78px;height:19px;line-height:19px;font-size:12px;letter-spacing:.2px">Close</div>
</body></html>
